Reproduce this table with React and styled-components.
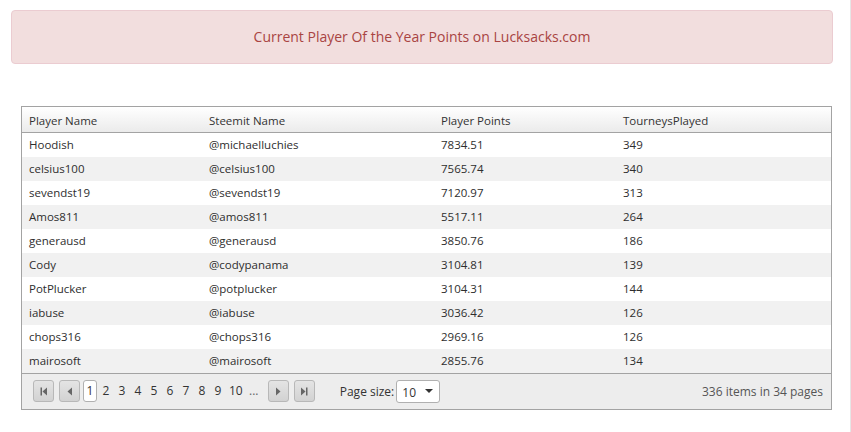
import React from "react";
import styled, {createGlobalStyle} from "styled-components";

const GlobalStyle = createGlobalStyle`
    html, body {
        margin: 0;
        padding: 0;
        background: #fff;
    }

    body {
        font-family: "Open Sans", "Liberation Sans", sans-serif;
        border-right: 1px solid #e6e6e6;
        box-sizing: border-box;
        width: 851px;
        min-height: 432px;
    }
`;

const players = [
    ["Hoodish", "@michaelluchies", "7834.51", "349"],
    ["celsius100", "@celsius100", "7565.74", "340"],
    ["sevendst19", "@sevendst19", "7120.97", "313"],
    ["Amos811", "@amos811", "5517.11", "264"],
    ["generausd", "@generausd", "3850.76", "186"],
    ["Cody", "@codypanama", "3104.81", "139"],
    ["PotPlucker", "@potplucker", "3104.31", "144"],
    ["iabuse", "@iabuse", "3036.42", "126"],
    ["chops316", "@chops316", "2969.16", "126"],
    ["mairosoft", "@mairosoft", "2855.76", "134"],
];

const columns = [
    {title: "Player Name", width: 180},
    {title: "Steemit Name", width: 232},
    {title: "Player Points", width: 182},
    {title: "TourneysPlayed"},
];

function App() {
    return (
        <Page>
            <GlobalStyle/>
            <Alert>Current Player Of the Year Points on Lucksacks.com</Alert>

            <Grid>
                <Table>
                    <colgroup>
                        {columns.map((c) => (
                            <col key={c.title} style={c.width ? {width: c.width} : undefined}/>
                        ))}
                    </colgroup>
                    <thead>
                    <tr>
                        {columns.map((c) => (
                            <HeaderCell key={c.title}>{c.title}</HeaderCell>
                        ))}
                    </tr>
                    </thead>
                    <tbody>
                    {players.map((p, i) => (
                        <Row key={p[0]} $alt={i % 2 === 1}>
                            {p.map((v, j) => (
                                <Cell key={j}>{v}</Cell>
                            ))}
                        </Row>
                    ))}
                    </tbody>
                </Table>

                <Pager>
                    <NavButton aria-label="first">
                        <NavIcon viewBox="0 0 12 12">
                            <rect x="2.5" y="2.5" width="1.5" height="8"/>
                            <path d="M9 2.5 L4.5 6.5 L9 10.5 Z"/>
                        </NavIcon>
                    </NavButton>
                    <NavButton aria-label="previous">
                        <NavIcon viewBox="0 0 12 12">
                            <path d="M8 2.5 L3.5 6.5 L8 10.5 Z"/>
                        </NavIcon>
                    </NavButton>
                    <Pages>
                        {["1", "2", "3", "4", "5", "6", "7", "8", "9", "10", "..."].map((n) => (
                            <PageNum key={n} $active={n === "1"} $more={n === "..."}>{n}</PageNum>
                        ))}
                    </Pages>
                    <NavButton aria-label="next">
                        <NavIcon viewBox="0 0 12 12">
                            <path d="M4 2.5 L8.5 6.5 L4 10.5 Z"/>
                        </NavIcon>
                    </NavButton>
                    <NavButton aria-label="last">
                        <NavIcon viewBox="0 0 12 12">
                            <path d="M3 2.5 L7.5 6.5 L3 10.5 Z"/>
                            <rect x="8" y="2.5" width="1.5" height="8"/>
                        </NavIcon>
                    </NavButton>

                    <SizeLabel>Page size:</SizeLabel>
                    <SizeSelect>
                        <span>10</span>
                        <Caret/>
                    </SizeSelect>

                    <Info>336 items in 34 pages</Info>
                </Pager>
            </Grid>
        </Page>
    );
}

export default App;

const Page = styled.div`
    padding: 10px 17px 0 11px;
`;

const Alert = styled.div`
    height: 54px;
    display: flex;
    align-items: center;
    justify-content: center;
    background: #f2dede;
    border: 1px solid #ebccd1;
    border-radius: 4px;
    color: #a94442;
    font-size: 14px;
    box-sizing: border-box;
    padding-bottom: 1px;
`;

const Grid = styled.div`
    margin: 42px 1px 0 10px;
    border: 1px solid #a3a3a3;
    font-family: "Open Sans", "Liberation Sans", sans-serif;
    font-size: 11.5px;
    color: #2e2e2e;
`;

const Table = styled.table`
    width: 100%;
    border-collapse: collapse;
    table-layout: fixed;
`;

const HeaderCell = styled.th`
    height: 25px;
    padding: 3px 8px 0 7px;
    box-sizing: border-box;
    text-align: left;
    font-weight: normal;
    color: #333;
    background: linear-gradient(#ffffff, #ebebeb);
    border-bottom: 1px solid #a3a3a3;
`;

const Row = styled.tr`
    background: ${(p) => (p.$alt ? "#f1f1f1" : "#ffffff")};
`;

const Cell = styled.td`
    height: 24px;
    padding: 0 8px 0 7px;
    white-space: nowrap;
`;

const Pager = styled.div`
    height: 35px;
    display: flex;
    align-items: center;
    padding: 0 8px 0 11px;
    background: #ededed;
    border-top: 1px solid #a3a3a3;
`;

const NavButton = styled.div`
    width: 21px;
    height: 22px;
    margin-right: 5px;
    display: flex;
    align-items: center;
    justify-content: center;
    border: 1px solid #b8b8b8;
    border-radius: 3px;
    background: linear-gradient(#e4e4e4, #d2d2d2);
    box-sizing: border-box;
`;

const NavIcon = styled.svg`
    width: 12px;
    height: 12px;
    fill: #666;
`;

const Pages = styled.div`
    display: flex;
    align-items: center;
    margin: 0 7px 0 -2px;
`;

const PageNum = styled.span`
    min-width: 14px;
    height: 22px;
    line-height: 20px;
    padding: 0 1px;
    margin-right: ${(p) => (p.$more ? "0" : "2px")};
    text-align: center;
    font-size: 12px;
    color: ${(p) => (p.$more ? "#666" : "#333")};
    background: ${(p) => (p.$active ? "#fff" : "transparent")};
    border: 1px solid ${(p) => (p.$active ? "#b0b0b0" : "transparent")};
    border-radius: 3px;
    box-sizing: border-box;
`;

const SizeLabel = styled.span`
    margin-left: 20px;
    font-size: 12px;
    color: #333;
`;

const SizeSelect = styled.div`
    width: 44px;
    height: 23px;
    margin-left: 2px;
    display: flex;
    align-items: center;
    justify-content: space-between;
    padding: 2px 6px 0 5px;
    box-sizing: border-box;
    background: #fff;
    border: 1px solid #b0b0b0;
    border-radius: 3px;
    font-size: 12px;
    color: #333;
`;

const Caret = styled.span`
    width: 0;
    height: 0;
    margin-top: -3px;
    border-left: 4px solid transparent;
    border-right: 4px solid transparent;
    border-top: 4px solid #333;
`;

const Info = styled.span`
    margin-left: auto;
    font-size: 12px;
    color: #555;
`;
